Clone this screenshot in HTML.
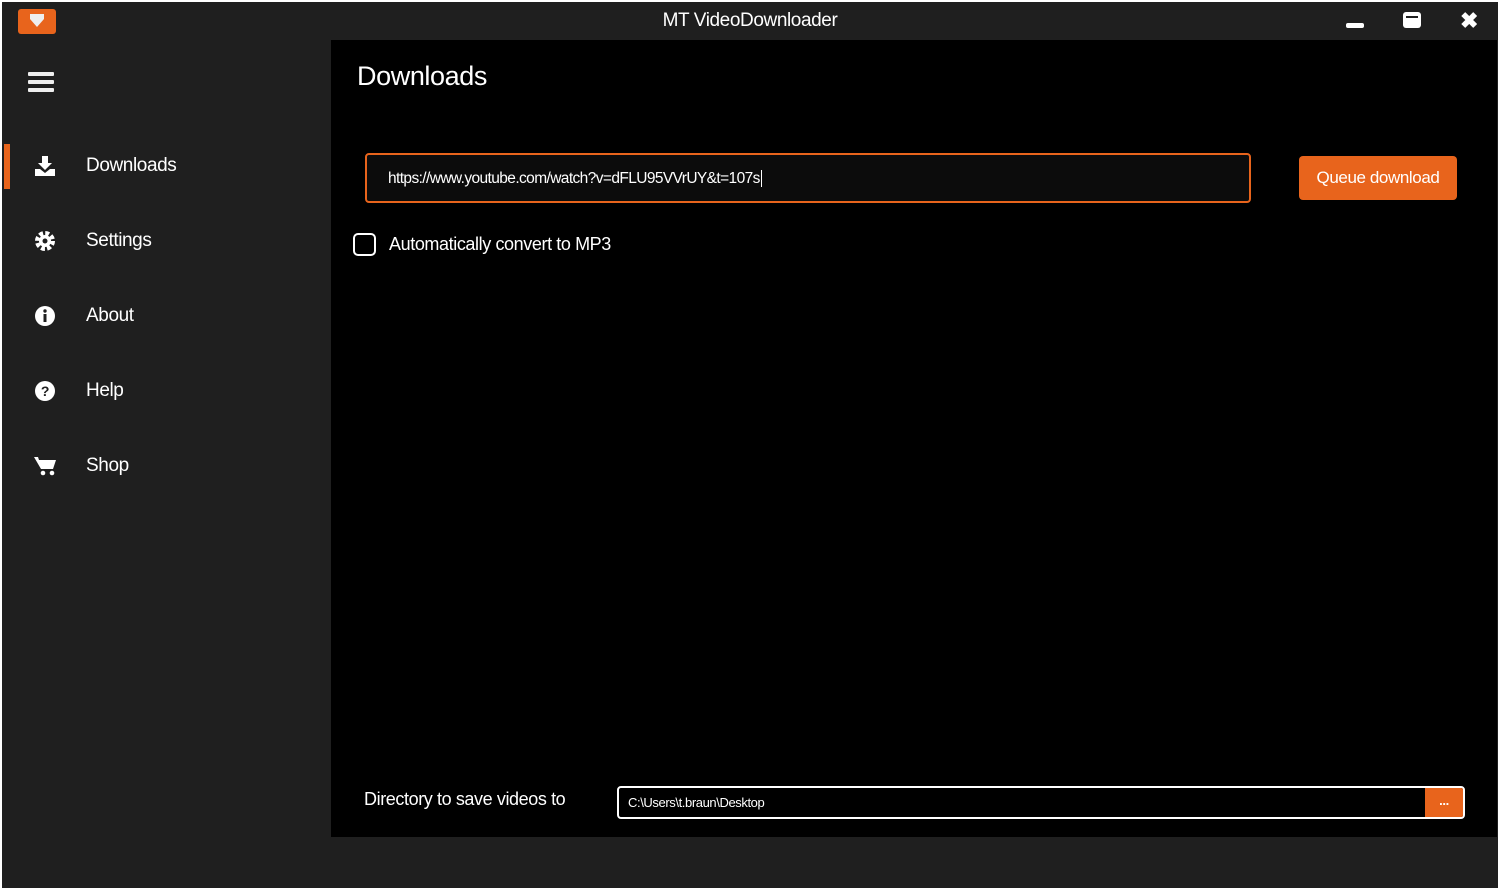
<!DOCTYPE html>
<html><head><meta charset="utf-8"><style>
*{margin:0;padding:0;box-sizing:border-box}
body{width:1500px;height:891px;background:#fff;overflow:hidden;font-family:"Liberation Sans",sans-serif;color:#fff;letter-spacing:-0.4px}
#win{position:absolute;left:2px;top:2px;width:1496px;height:886px;background:#1f1f1f;}
.abs{position:absolute}
#main{left:329px;top:38px;width:1166px;height:797px;background:#000}
.nav{position:absolute;left:0;width:329px;height:40px;font-size:19px}
.nav span{position:absolute;left:84px;top:9px}
.nav svg{position:absolute;left:32px;top:9px}
</style></head><body>
<div id="win">
  <div class="abs" style="left:16px;top:7px;width:38px;height:25px;background:#e8641c;border-radius:3px"></div>
  <svg class="abs" style="left:26px;top:11px" width="18" height="15" viewBox="0 0 18 15"><path d="M2 1h14v5l-7 8l-7-8z" fill="#eee"/></svg>
  <div class="abs" style="left:0;width:1496px;top:8px;text-align:center;font-size:19px">MT VideoDownloader</div>
  <div class="abs" style="left:1344px;top:21px;width:18px;height:5px;background:#fff;border-radius:2px"></div>
  <div class="abs" style="left:1401px;top:10px;width:18px;height:16px;background:#fff;border-radius:3px"></div>
  <div class="abs" style="left:1404px;top:14px;width:12px;height:2px;background:#1f1f1f"></div>
  <div class="abs" style="left:1458px;top:6px;font-size:22px;font-weight:bold">✖</div>
  <div class="abs" style="left:26px;top:70px;width:26px;height:4px;background:#eee;border-radius:1px"></div>
  <div class="abs" style="left:26px;top:78px;width:26px;height:4px;background:#eee;border-radius:1px"></div>
  <div class="abs" style="left:26px;top:86px;width:26px;height:4px;background:#eee;border-radius:1px"></div>
  <div class="abs" style="left:2px;top:142px;width:6px;height:45px;background:#e8641c"></div>
  <div class="nav" style="top:144px"><svg width="22" height="22" viewBox="0 0 22 22"><path d="M8 1h6v7h4l-7 7l-7-7h4z" fill="#fff"/><path d="M1 14h5l5 4l5-4h5v7H1z" fill="#fff"/></svg><span>Downloads</span></div>
  <div class="nav" style="top:219px"><svg width="22" height="22" viewBox="0 0 22 22"><circle cx="11" cy="11" r="7" fill="none" stroke="#fff" stroke-width="6" stroke-dasharray="3.5 2"/><circle cx="11" cy="11" r="6" fill="#fff"/><circle cx="11" cy="11" r="2.5" fill="#1f1f1f"/></svg><span>Settings</span></div>
  <div class="nav" style="top:294px"><svg width="22" height="22" viewBox="0 0 22 22"><circle cx="11" cy="11" r="10" fill="#fff"/><rect x="9.5" y="9" width="3" height="8" fill="#1f1f1f"/><circle cx="11" cy="6" r="1.7" fill="#1f1f1f"/></svg><span>About</span></div>
  <div class="nav" style="top:369px"><svg width="22" height="22" viewBox="0 0 22 22"><circle cx="11" cy="11" r="10" fill="#fff"/><text x="11" y="16" font-size="14" font-weight="bold" text-anchor="middle" fill="#1f1f1f" font-family="Liberation Sans">?</text></svg><span>Help</span></div>
  <div class="nav" style="top:444px"><svg width="24" height="22" viewBox="0 0 24 22"><path d="M0 2h4l1 3h17l-3 9H7z" fill="#fff"/><circle cx="9" cy="18" r="2.3" fill="#fff"/><circle cx="18" cy="18" r="2.3" fill="#fff"/></svg><span>Shop</span></div>
  <div id="main" class="abs">
    <div class="abs" style="left:26px;top:21px;font-size:27px">Downloads</div>
    <div class="abs" style="left:34px;top:113px;width:886px;height:50px;border:2px solid #e8641c;border-radius:4px;background:#0c0c0c"></div>
    <div class="abs" style="left:57px;top:130px;font-size:15.5px;letter-spacing:-0.6px">https://www.youtube.com/watch?v=dFLU95VVrUY&amp;t=107s<span style="border-left:1px solid #fff;margin-left:1px"></span></div>
    <div class="abs" style="left:968px;top:116px;width:158px;height:44px;background:#e8641c;border-radius:4px;font-size:17px;text-align:center;line-height:44px">Queue download</div>
    <div class="abs" style="left:22px;top:193px;width:23px;height:23px;border:2.5px solid #fff;border-radius:5px"></div>
    <div class="abs" style="left:58px;top:194px;font-size:18px">Automatically convert to MP3</div>
    <div class="abs" style="left:33px;top:749px;font-size:18px">Directory to save videos to</div>
    <div class="abs" style="left:286px;top:746px;width:848px;height:33px;border:2px solid #fff;border-radius:4px;background:#000;overflow:hidden">
      <div class="abs" style="left:9px;top:7px;font-size:13px">C:\Users\t.braun\Desktop</div>
      <div class="abs" style="right:0;top:0;width:38px;height:29px;background:#e8641c;text-align:center;font-size:13px;line-height:26px;font-weight:bold">...</div>
    </div>
  </div>
</div>
</body></html>
